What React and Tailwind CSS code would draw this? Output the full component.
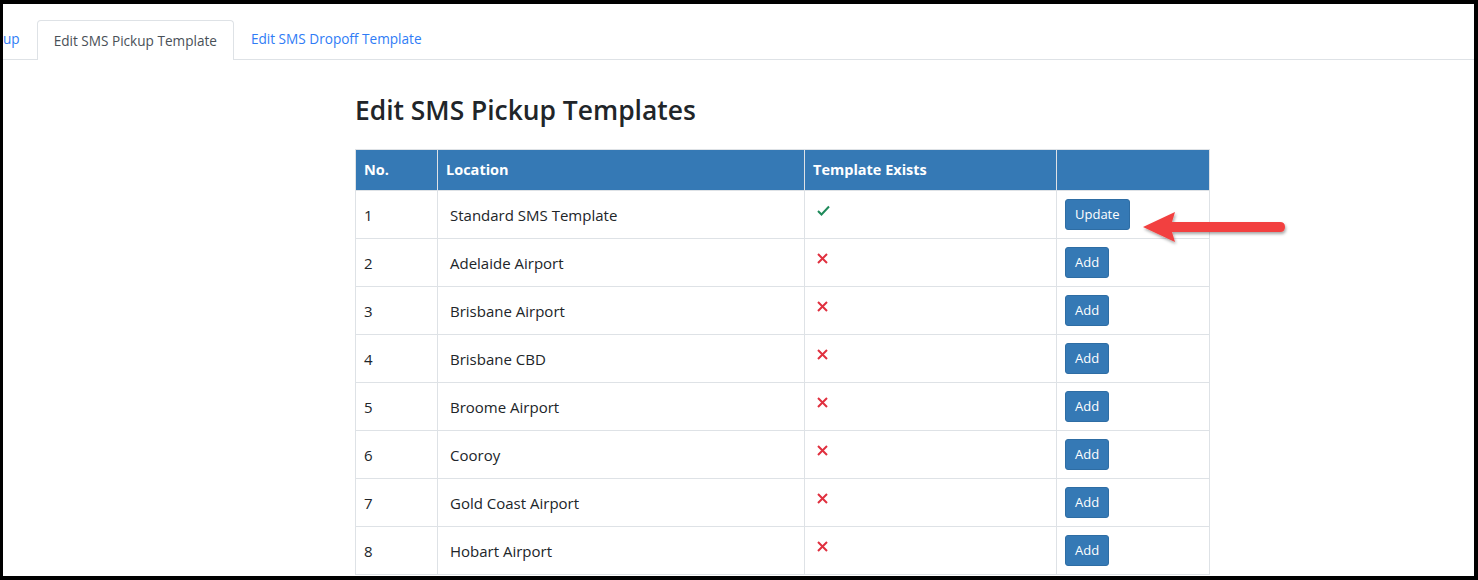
import React from "react";

const rows = [
  { no: 1, location: "Standard SMS Template", exists: true },
  { no: 2, location: "Adelaide Airport", exists: false },
  { no: 3, location: "Brisbane Airport", exists: false },
  { no: 4, location: "Brisbane CBD", exists: false },
  { no: 5, location: "Broome Airport", exists: false },
  { no: 6, location: "Cooroy", exists: false },
  { no: 7, location: "Gold Coast Airport", exists: false },
  { no: 8, location: "Hobart Airport", exists: false },
];

const CheckIcon = () => (
  <svg width="13" height="11" viewBox="0 0 13 11" className="block">
    <path d="M1 6 L4.5 9.5 L12 1.5" fill="none" stroke="#1e8a5a" strokeWidth="2" />
  </svg>
);

const CrossIcon = () => (
  <svg width="11" height="11" viewBox="0 0 11 11" className="block">
    <path d="M1 1 L10 10 M10 1 L1 10" fill="none" stroke="#e0303f" strokeWidth="2" />
  </svg>
);

// red annotation arrow pointing at the Update button
const Arrow = () => (
  <svg width="150" height="40" viewBox="0 0 150 40" className="absolute left-[1136px] top-[204px]">
    <defs>
      <filter id="sh" x="-10%" y="-30%" width="120%" height="160%">
        <feDropShadow dx="1" dy="2" stdDeviation="1.5" floodColor="#000" floodOpacity="0.35" />
      </filter>
    </defs>
    <g filter="url(#sh)">
      <path d="M4 19 L36 4 L33 14 L141 14 Q146 14 146 19 Q146 24 141 24 L33 24 L36 34 Z" fill="#f2403f" />
    </g>
  </svg>
);

export default function App() {
  return (
    <div
      className="relative w-[1478px] h-[580px] overflow-hidden bg-white border-[4px] border-l-[3px] border-black text-[#212529]"
      style={{ fontFamily: '"Open Sans", "Noto Sans", sans-serif' }}
    >
      {/* tabs */}
      <div className="flex items-end h-[56px] border-b border-[#dee2e6] text-[13.6px]">
        <div className="h-[40px] flex items-center pr-[17px] text-[#2f7cf6]">
          <span>up</span>
        </div>
        <div className="h-[40px] flex items-center px-[16px] pt-[1px] border border-b-0 border-[#dee2e6] rounded-t-[4px] bg-white text-[#495057] -mb-[1px]">
          Edit SMS Pickup Template
        </div>
        <div className="h-[40px] flex items-center px-[17px] pt-[1px] text-[#2f7cf6]">Edit SMS Dropoff Template</div>
      </div>

      <div className="ml-[352px] w-[855px]">
        <h1 className="mt-[33px] text-[26.4px] font-semibold leading-[34px] text-[#212529]">
          Edit SMS Pickup Templates
        </h1>

        <table className="mt-[22px] w-[855px] border-collapse text-[15px]">
          <thead>
            <tr className="bg-[#3579b5] text-white font-bold h-[41px] text-[14.5px]">
              <th className="w-[82px] text-left pl-[8px] border border-[#dee2e6]">No.</th>
              <th className="w-[367px] text-left pl-[8px] border border-[#dee2e6]">Location</th>
              <th className="w-[252px] text-left pl-[8px] border border-[#dee2e6]">Template Exists</th>
              <th className="border border-[#dee2e6]"></th>
            </tr>
          </thead>
          <tbody>
            {rows.map((r) => (
              <tr key={r.no} className="h-[48px]">
                <td className="pl-[8px] pt-[1px] border border-[#dee2e6]">{r.no}</td>
                <td className="pl-[12px] pt-[1px] border border-[#dee2e6]">{r.location}</td>
                <td className="pl-[12px] align-top pt-[14px] border border-[#dee2e6]">
                  {r.exists ? <CheckIcon /> : <CrossIcon />}
                </td>
                <td className="pl-[8px] border border-[#dee2e6]">
                  <button className="h-[31px] px-[9px] rounded-[3px] bg-[#3579b5] text-white text-[13px] border border-[#2e6da4]">
                    {r.exists ? "Update" : "Add"}
                  </button>
                </td>
              </tr>
            ))}
          </tbody>
        </table>
      </div>

      <Arrow />
    </div>
  );
}
